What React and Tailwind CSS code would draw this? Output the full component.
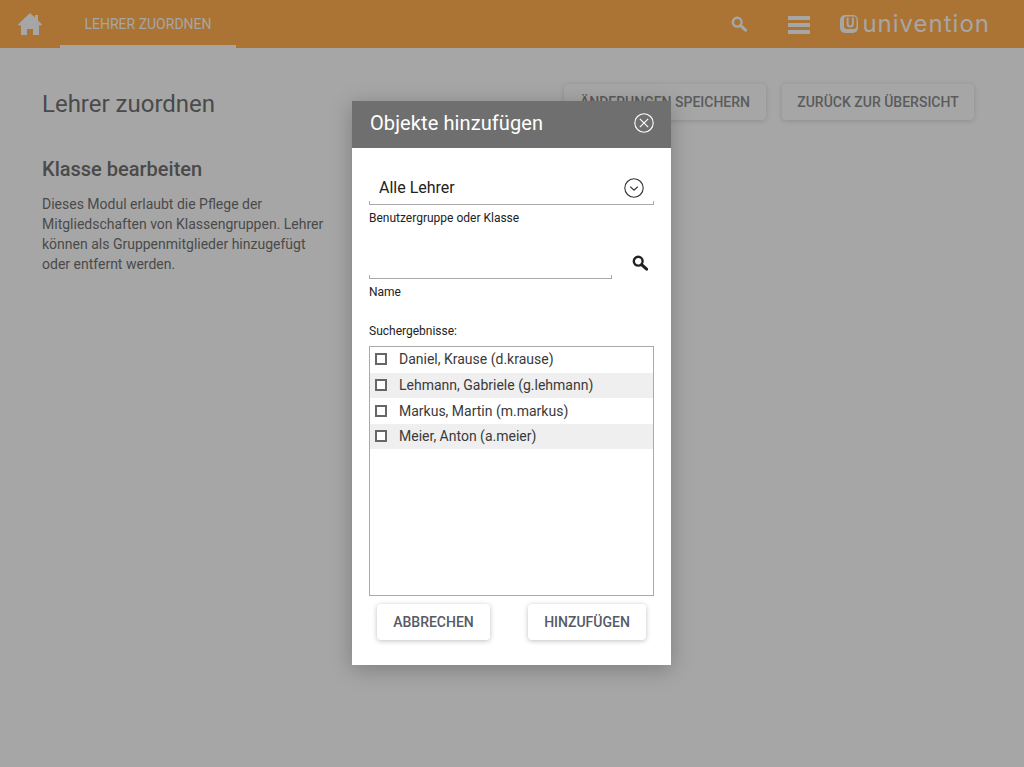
import React from "react";

const font = { fontFamily: "Roboto, sans-serif" };

function Home() {
  return (
    <svg width="24" height="22" viewBox="0 0 24 22" fill="#a6a6a6">
      <path d="M12 0 L17 4.6 V2 H20 V7.4 L24 11.6 L23.4 12.4 H21 V22 H15 V16 H9 V22 H3 V12.4 H0.6 L0 11.6 Z" />
    </svg>
  );
}

function Lens({ size, color, sw = 2.4 }) {
  return (
    <svg width={size} height={size} viewBox="0 0 16 16" fill="none" stroke={color}>
      <circle cx="6.2" cy="6.2" r="4.4" strokeWidth={sw} />
      <path d="M9.6 9.6 L14.6 14.2" strokeWidth={sw + 0.6} strokeLinecap="round" />
    </svg>
  );
}

function Logo() {
  return (
    <svg width="18" height="18" viewBox="0 0 18 18" fill="none">
      <rect width="18" height="18" rx="5" fill="#a6a6a6" />
      <rect x="4" y="1.5" width="12.5" height="12.5" rx="3" fill="#ab7434" />
      <path d="M7.6 2.5 V9 Q7.6 11.6 10.2 11.6 Q12.9 11.6 12.9 9 V2.5" stroke="#a6a6a6" strokeWidth="2" />
    </svg>
  );
}

function PageButton({ children, className }) {
  return (
    <button className={`h-9 rounded-sm bg-[#a6a6a6] text-sm font-medium whitespace-nowrap text-[#5b5b5b] uppercase shadow-[0_1px_5px_rgba(0,0,0,0.15)] ${className}`}>
      {children}
    </button>
  );
}

function DialogButton({ children, className }) {
  return (
    <button className={`h-9 rounded-sm bg-white text-sm font-medium text-[#565a64] uppercase shadow-[0_1px_5px_rgba(0,0,0,0.25)] ${className}`}>
      {children}
    </button>
  );
}

// bottom line of a form field, with the little ticks at both ends
function FieldLine() {
  return <div className="h-1 border-x border-b border-[#aaaaaa]" />;
}

const rows = [
  { name: "Daniel, Krause (d.krause)", cls: "h-[26px] pb-[2px]" },
  { name: "Lehmann, Gabriele (g.lehmann)", cls: "h-[25px] pb-[2px] bg-[#efefef]" },
  { name: "Markus, Martin (m.markus)", cls: "h-[26px]" },
  { name: "Meier, Anton (a.meier)", cls: "h-[25px] pb-[2px] bg-[#efefef]" },
];

export default function App() {
  return (
    <div className="relative h-[767px] w-[1024px] overflow-hidden bg-[#a6a6a6]" style={font}>
      <header className="flex h-12 items-start bg-[#ab7434]">
        <div className="ml-[18px] mt-[13px]"><Home /></div>
        <div className="ml-[18px] flex h-12 w-[176px] items-center justify-center border-b-[3px] border-[#a6a6a6] pt-[2px] text-sm uppercase text-[#a6a6a6]">
          Lehrer zuordnen
        </div>
        <div className="ml-auto mt-[16px] mr-[41px]"><Lens size={16} color="#a6a6a6" /></div>
        <div className="mt-[16px] flex w-[22px] flex-col gap-[3px]">
          <div className="h-1 bg-[#a6a6a6]" />
          <div className="h-1 bg-[#a6a6a6]" />
          <div className="h-1 bg-[#a6a6a6]" />
        </div>
        <div className="ml-[30px] mr-[34px] mt-[15px] flex w-[150px] items-center justify-between">
          <Logo />
          <span className="text-2xl leading-[18px] font-normal tracking-[1px] text-[#a6a6a6]" style={{ fontFamily: "Inter, sans-serif" }}>univention</span>
        </div>
      </header>

      <main className="flex items-start justify-between pl-[42px] pr-[50px] pt-9">
        <div className="w-[290px]">
          <h1 className="text-2xl leading-10 text-[#4a4a4a]">Lehrer zuordnen</h1>
          <h2 className="mt-[33px] text-xl leading-6 font-medium text-[#4a4a4a]">Klasse bearbeiten</h2>
          <p className="mt-[13px] text-sm leading-5 text-[#4a4a4a]">
            Dieses Modul erlaubt die Pflege der Mitgliedschaften von Klassengruppen. Lehrer können als Gruppenmitglieder hinzugefügt oder entfernt werden.
          </p>
        </div>
        <div className="flex gap-4">
          <PageButton className="w-[202px]">Änderungen speichern</PageButton>
          <PageButton className="w-[192px]">Zurück zur Übersicht</PageButton>
        </div>
      </main>

      {/* dialog */}
      <div className="absolute left-[352px] top-[101px] h-[564px] w-[319px] bg-white shadow-[0_4px_20px_rgba(0,0,0,0.25)]">
        <div className="flex h-[47px] items-center justify-between bg-[#6f6f6f] pb-[3px] pl-[18px] pr-[17px]">
          <span className="text-xl tracking-[0.1px] text-white">Objekte hinzufügen</span>
          <svg width="20" height="20" viewBox="0 0 20 20" fill="none" stroke="white" strokeWidth="1.1">
            <circle cx="10" cy="10" r="9.2" />
            <path d="M5.8 5.8 L14.2 14.2 M14.2 5.8 L5.8 14.2" />
          </svg>
        </div>

        <div className="px-[17px]">
          <div className="mt-[26px] flex h-[27px] items-center justify-between pl-[10px] pr-[10px]">
            <span className="text-base text-[#222222]">Alle Lehrer</span>
            <svg width="20" height="20" viewBox="0 0 20 20" fill="none" stroke="#333333" strokeWidth="1.1">
              <circle cx="10" cy="10" r="9.2" />
              <path d="M6.2 8.6 L10 12.2 L13.8 8.6" strokeWidth="1.3" />
            </svg>
          </div>
          <FieldLine />
          <div className="mt-[6px] text-xs leading-[14px] text-[#222222]">Benutzergruppe oder Klasse</div>

          <div className="mt-[23px] flex items-start justify-between">
            <div className="w-[243px] pt-[27px]"><FieldLine /></div>
            <div className="mr-[6px] mt-[7px]"><Lens size={16} color="#222222" /></div>
          </div>
          <div className="mt-[6px] text-xs leading-[14px] text-[#222222]">Name</div>

          <div className="mt-[25px] text-xs leading-[14px] text-[#222222]">Suchergebnisse:</div>
          <div className="mt-2 h-[250px] border border-[#aaaaaa]">
            {rows.map((r) => (
              <div key={r.name} className={`flex items-center ${r.cls}`}>
                <span className="ml-[5px] h-3 w-3 border-2 border-[#666666] bg-white" />
                <span className="ml-3 text-sm text-[#3a3a3a]">{r.name}</span>
              </div>
            ))}
          </div>
          <div className="mt-2 flex justify-between px-2">
            <DialogButton className="w-[113px]">Abbrechen</DialogButton>
            <DialogButton className="w-[118px]">Hinzufügen</DialogButton>
          </div>
        </div>
      </div>
    </div>
  );
}
